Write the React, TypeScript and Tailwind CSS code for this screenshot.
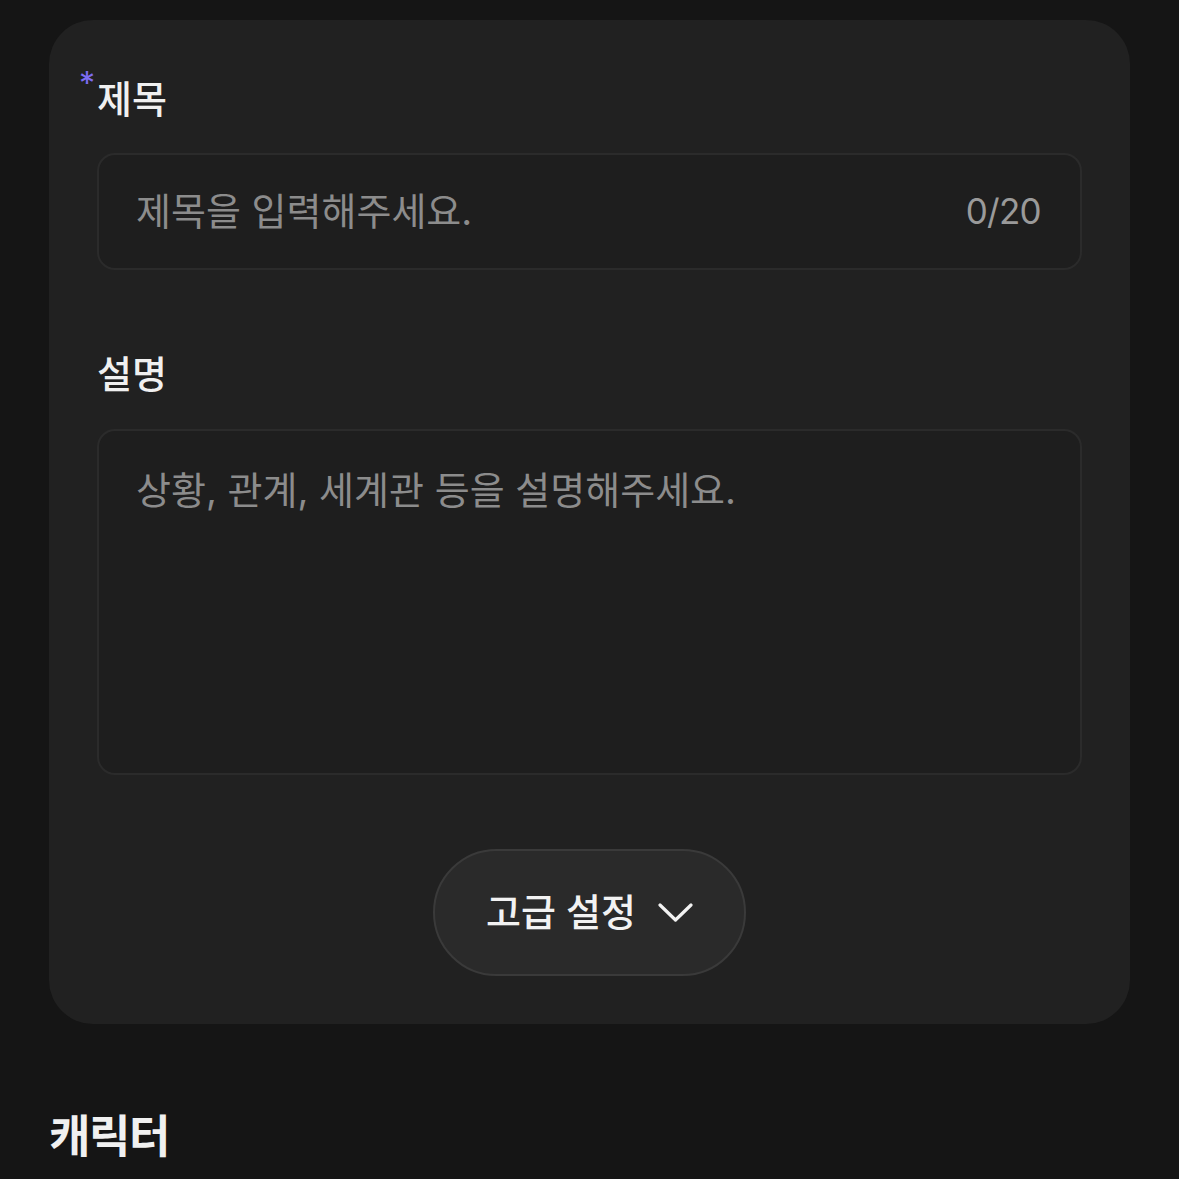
const font = { fontFamily: 'Inter, "Noto Sans CJK KR", sans-serif' };

function Label({ text, required }: { text: string; required?: boolean }) {
  return (
    <div className="relative flex h-[50px] items-center">
      {required && (
        <span className="absolute -left-[18px] -top-[6px] text-[32px] leading-none text-[#7d6cf2]">
          *
        </span>
      )}
      <span className="text-[38px] font-medium text-[#f0f0f0]">{text}</span>
    </div>
  );
}

export default function App() {
  return (
    <div
      className="min-h-screen bg-[#151515] px-[49px] pt-[20px] pb-10"
      style={font}
    >
      <div className="rounded-[44px] bg-[#212121] px-12 pt-[54px] pb-12">
        <Label text="제목" required />
        <div className="mt-[29px] flex h-[117px] items-center justify-between rounded-[18px] border-2 border-[#2b2b2b] bg-[#1e1e1e] pl-[37px] pr-[39px]">
          <input
            className="w-full bg-transparent text-[38px] text-[#eeeeee] outline-none placeholder:text-[#8c8c8c]"
            placeholder="제목을 입력해주세요."
            style={font}
          />
          <span className="shrink-0 text-[35px] tracking-[-0.02em] text-[#9a9a9a]">
            0/20
          </span>
        </div>

        <div className="mt-[79px]">
          <Label text="설명" />
        </div>
        <textarea
          className="mt-[30px] block h-[346px] w-full resize-none rounded-[18px] border-2 border-[#2b2b2b] bg-[#1e1e1e] pl-[37px] pr-10 pt-[33px] text-[38px] leading-[1.4] text-[#eeeeee] outline-none placeholder:text-[#8c8c8c]"
          placeholder="상황, 관계, 세계관 등을 설명해주세요."
          style={font}
        />

        <div className="mt-[74px] flex justify-center">
          <button className="flex h-[127px] w-[313px] items-center justify-center gap-[22px] rounded-full border-2 border-[#3a3a3a] bg-[#2a2a2a]">
            <span className="text-[38px] font-medium text-[#f2f2f2]">
              고급 설정
            </span>
            <svg
              width="35"
              height="20"
              viewBox="0 0 35 20"
              fill="none"
              stroke="#f2f2f2"
              strokeWidth="3.2"
              strokeLinecap="round"
              strokeLinejoin="round"
            >
              <polyline points="2,2 17.5,17 33,2" />
            </svg>
          </button>
        </div>
      </div>

      <h2 className="mt-[83px] text-[45px] font-bold leading-[60px] tracking-[-0.03em] text-[#f0f0f0]">
        캐릭터
      </h2>
    </div>
  );
}
